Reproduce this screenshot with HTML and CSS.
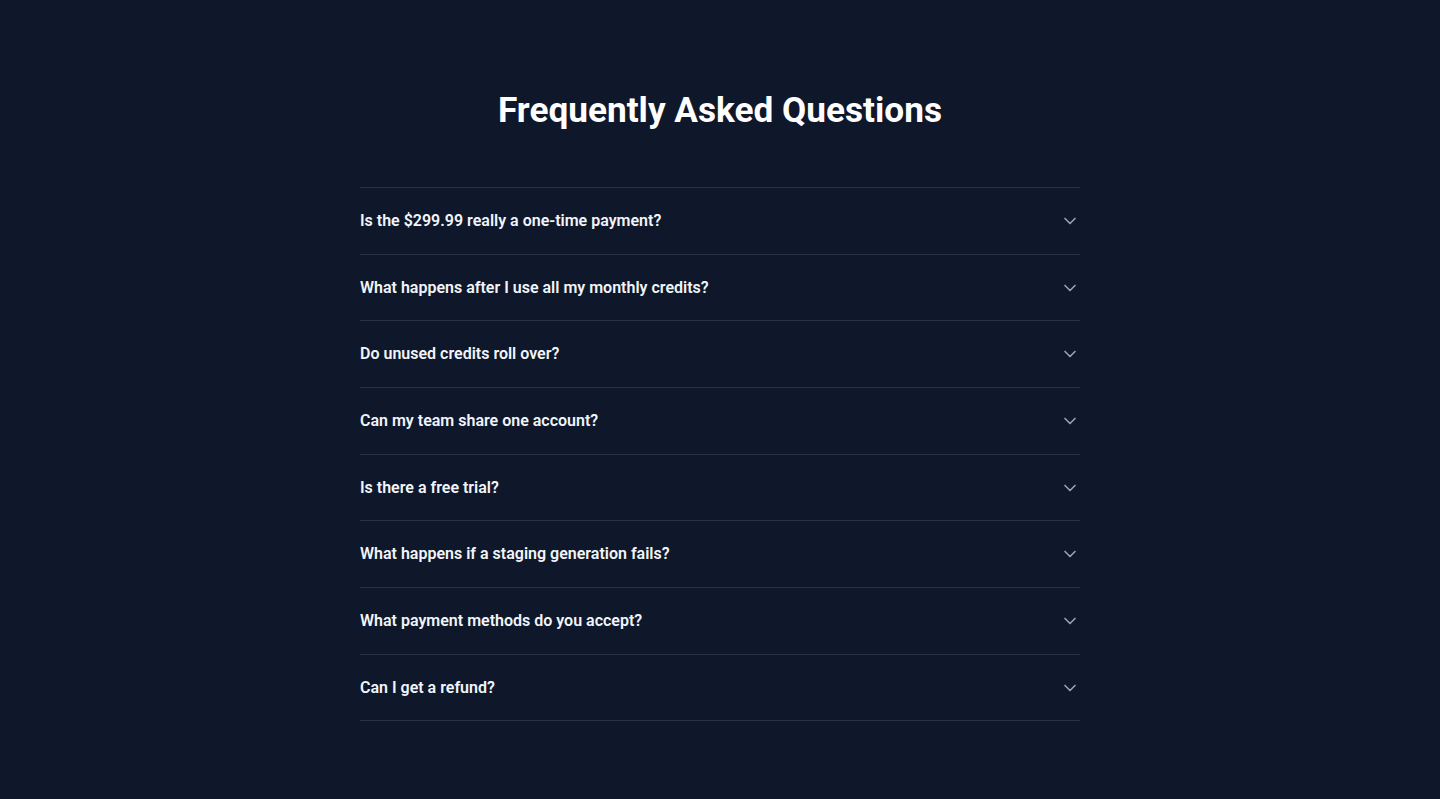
FILE: index.html
```html
<!DOCTYPE html>
<html lang="en">
<head>
<meta charset="utf-8">
<title>FAQ</title>
<link rel="stylesheet" href="styles.css">
</head>
<body>
<section class="faq">
  <h2 class="faq-title">Frequently Asked Questions</h2>
  <div class="faq-list">
    <div class="faq-item"><span class="faq-q">Is the $299.99 really a one-time payment?</span><svg class="chev" viewBox="0 0 24 24"><path d="m6 9 6 6 6-6"/></svg></div>
    <div class="faq-item"><span class="faq-q">What happens after I use all my monthly credits?</span><svg class="chev" viewBox="0 0 24 24"><path d="m6 9 6 6 6-6"/></svg></div>
    <div class="faq-item"><span class="faq-q">Do unused credits roll over?</span><svg class="chev" viewBox="0 0 24 24"><path d="m6 9 6 6 6-6"/></svg></div>
    <div class="faq-item"><span class="faq-q">Can my team share one account?</span><svg class="chev" viewBox="0 0 24 24"><path d="m6 9 6 6 6-6"/></svg></div>
    <div class="faq-item"><span class="faq-q">Is there a free trial?</span><svg class="chev" viewBox="0 0 24 24"><path d="m6 9 6 6 6-6"/></svg></div>
    <div class="faq-item"><span class="faq-q">What happens if a staging generation fails?</span><svg class="chev" viewBox="0 0 24 24"><path d="m6 9 6 6 6-6"/></svg></div>
    <div class="faq-item"><span class="faq-q">What payment methods do you accept?</span><svg class="chev" viewBox="0 0 24 24"><path d="m6 9 6 6 6-6"/></svg></div>
    <div class="faq-item"><span class="faq-q">Can I get a refund?</span><svg class="chev" viewBox="0 0 24 24"><path d="m6 9 6 6 6-6"/></svg></div>
  </div>
</section>
</body>
</html>
```
FILE: styles.css
```css
* { box-sizing: border-box; }
html, body {
  margin: 0;
  padding: 0;
  background: #0f172a;
  min-height: 100%;
}
body {
  font-family: Roboto, "Liberation Sans", sans-serif;
  color: #f8fafc;
  height: 799px;
  overflow: hidden;
}
.faq {
  width: 720px;
  margin: 0 auto;
  padding-top: 90px;
}
.faq-title {
  margin: 0 0 57px;
  font-size: 35.2px;
  line-height: 40px;
  font-weight: 700;
  text-align: center;
  color: #ffffff;
}
.faq-list {
  border-top: 1px solid #263245;
}
.faq-item {
  display: flex;
  align-items: center;
  justify-content: space-between;
  padding: 21px 0 20.67px;
  border-bottom: 1px solid #263245;
}
.faq-q {
  font-size: 16px;
  line-height: 24px;
  font-weight: 600;
  color: #f1f5f9;
}
.chev {
  width: 20px;
  height: 20px;
  flex: none;
  fill: none;
  stroke: #94a3b8;
  stroke-width: 2;
  stroke-linecap: round;
  stroke-linejoin: round;
}
```
